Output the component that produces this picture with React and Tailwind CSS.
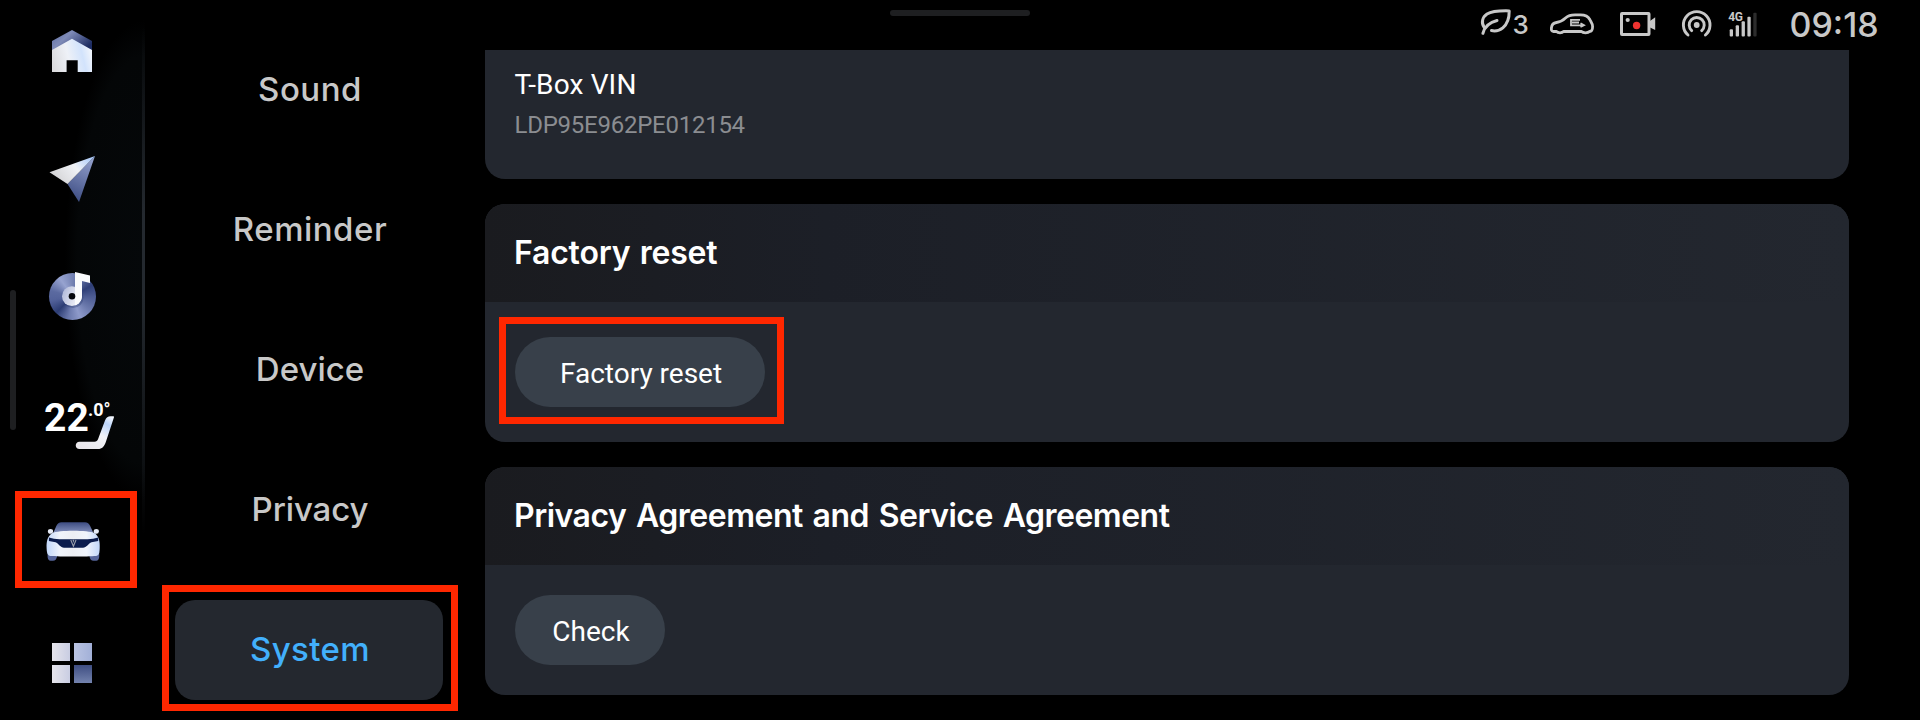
import React from "react";

const menu = [
  { label: "Sound", tracking: "tracking-[0.5px]" },
  { label: "Reminder", tracking: "tracking-[0.5px]" },
  { label: "Device", tracking: "tracking-[0px]" },
  { label: "Privacy", tracking: "tracking-[-0.1px]" },
  { label: "System", tracking: "tracking-[0.4px]", active: true },
];

function Highlight({ className }) {
  return <div className={`pointer-events-none absolute border-[7px] border-[#ff2700] ${className}`} />;
}

function HomeIcon() {
  return (
    <svg width="145" height="110" viewBox="0 0 145 110" className="block">
      <defs>
        <linearGradient id="homeRoof" x1="0" y1="0" x2="1" y2="0.6">
          <stop offset="0" stopColor="#5a6a9e" />
          <stop offset="0.4" stopColor="#7f8bb8" />
          <stop offset="1" stopColor="#1d2c62" />
        </linearGradient>
        <linearGradient id="homeBody" x1="0" y1="0.6" x2="1" y2="0.4">
          <stop offset="0" stopColor="#dcdcdf" />
          <stop offset="0.4" stopColor="#eef1f7" />
          <stop offset="0.75" stopColor="#d2e3fc" />
          <stop offset="1" stopColor="#f3f6fc" />
        </linearGradient>
      </defs>
      <path d="M72 30 92 41V52H52V41Z" fill="url(#homeRoof)" />
      <path d="M72 38.8 92 50V72H77.7V60.3H66.6V72H52V50Z" fill="url(#homeBody)" />
    </svg>
  );
}

function NavigateIcon() {
  return (
    <svg width="145" height="125" viewBox="0 110 145 125" className="block">
      <defs>
        <linearGradient id="wingTop" x1="0" y1="0.5" x2="1" y2="0">
          <stop offset="0" stopColor="#d6d6d8" />
          <stop offset="0.5" stopColor="#f0f2f6" />
          <stop offset="1" stopColor="#9fc4fb" />
        </linearGradient>
        <linearGradient id="wingSide" x1="0.7" y1="0" x2="0.4" y2="1">
          <stop offset="0" stopColor="#93a0cc" />
          <stop offset="1" stopColor="#3f4f85" />
        </linearGradient>
      </defs>
      <path d="M95 156 67.5 184 79 202Z" fill="url(#wingSide)" />
      <path d="M95 156 49.5 172.3 67.5 184Z" fill="url(#wingTop)" />
    </svg>
  );
}

function MusicIcon() {
  return (
    <div className="relative h-[125px] w-[145px] pl-[49px] pt-[38px]">
      <div className="h-[47px] w-[47px] rounded-full bg-[conic-gradient(from_0deg,#7583b4,#5a699e_30deg,#2f3f77_60deg,#4c5b92_90deg,#6a78ab_125deg,#8e9aca_160deg,#6c7aae_190deg,#2d3d74_225deg,#53629a_260deg,#5b6aa0_285deg,#97a3d0_325deg,#7583b4)]" />
      <svg width="145" height="125" viewBox="0 235 145 125" className="absolute left-0 top-0 block">
        <defs>
          <linearGradient id="noteHead" x1="0" y1="0" x2="1" y2="0.4">
            <stop offset="0" stopColor="#aab3d6" />
            <stop offset="1" stopColor="#f4f5fa" />
          </linearGradient>
        </defs>
        <circle cx="73" cy="297.5" r="10.5" fill="#26366b" opacity="0.35" />
        <circle cx="71.9" cy="296.2" r="9.9" fill="url(#noteHead)" />
        <path d="M75 272 90 275.5V283L82 281V296.5C82 300 79 304 75 305.3Z" fill="#fafbfd" />
        <circle cx="72" cy="296.3" r="3.3" fill="#05070d" />
      </svg>
    </div>
  );
}

function Temperature() {
  return (
    <div className="relative h-[120px] w-[145px] font-['Roboto',sans-serif] font-bold text-white">
      <div className="flex items-start pl-[44px] pt-[38.5px]">
        <span className="w-[44px] text-[39px] leading-[39px]">22</span>
        <span className="mt-[2px] text-[18px] leading-[18px]">.0°</span>
      </div>
      <svg width="145" height="120" viewBox="0 360 145 120" className="absolute left-0 top-0 block">
        <defs>
          <linearGradient id="seat" x1="0.2" y1="1" x2="0.9" y2="0">
            <stop offset="0" stopColor="#e9e6ea" />
            <stop offset="0.5" stopColor="#f2f3f8" />
            <stop offset="0.8" stopColor="#bcd5fb" />
            <stop offset="1" stopColor="#f4f8ff" />
          </linearGradient>
        </defs>
        <path
          d="M79.5 441.7H94.5C96.5 441.7 97.3 441 98 439.3L105 420.5C106.2 417.3 108 416.2 110.5 416.2H113C114 416.2 114.2 416.8 113.9 417.6L106 441.5C104.4 446.5 102 449 98 449H79.5C74.5 449 74.5 441.7 79.5 441.7Z"
          fill="url(#seat)"
        />
      </svg>
    </div>
  );
}

function CarIcon() {
  return (
    <div className="relative h-[120px] w-[145px]">
      <svg width="145" height="120" viewBox="0 480 145 120" className="block">
        <defs>
          <linearGradient id="carRoof" x1="0" y1="0" x2="0" y2="1">
            <stop offset="0" stopColor="#3c4b80" />
            <stop offset="1" stopColor="#8592be" />
          </linearGradient>
          <linearGradient id="carBody" x1="0" y1="0" x2="1" y2="0">
            <stop offset="0" stopColor="#c2d7fa" />
            <stop offset="0.25" stopColor="#f0f4fb" />
            <stop offset="0.5" stopColor="#eceef3" />
            <stop offset="0.75" stopColor="#f0f4fb" />
            <stop offset="1" stopColor="#c2d7fa" />
          </linearGradient>
        </defs>
        <path d="M47.6 552H57V556.5Q56.3 560.7 53 560.7H50.5Q48 560.7 47.6 557ZM99.2 552H89.5V556.5Q90.2 560.7 93.5 560.7H96.3Q98.800 560.7 99.2 557Z" fill="#56659a" />
        <path d="M53.3 533 56.3 526Q57.8 522.2 61.5 522.2H85Q88.7 522.2 90.2 526L93.4 533Z" fill="url(#carRoof)" />
        <ellipse cx="50.5" cy="531.4" rx="2.6" ry="2.3" fill="#e6ebf6" />
        <ellipse cx="96.3" cy="531.4" rx="2.6" ry="2.3" fill="#e6ebf6" />
        <path d="M52 533.2C59 530 87.5 530 94.7 533.2C99 536.5 100 541 99.7 548C99.5 553.5 99 555.5 96 555.9C88 556.6 59 556.6 50.5 555.9C47.5 555.5 46.8 553 46.6 548C46.4 541 47.5 536.5 52 533.2Z" fill="url(#carBody)" />
        <path d="M48.9 537.4Q54 539.3 60 539.2H87Q93 539.3 98.2 537.4V540.9L91.5 542.3C88.5 543.5 86.5 547.8 83 547.8H64C60.5 547.8 58.5 543.5 55.5 542.3L48.9 540.9Z" fill="#0b1c4d" />
        <path d="M70.8 540 73.4 546.3 76 540" fill="none" stroke="#9a9ea9" strokeWidth="1.1" />
        <path d="M72.5 539.8H74.3L73.4 543Z" fill="#9a9ea9" />
      </svg>
      <Highlight className="left-[15px] top-[11px] h-[97px] w-[122px]" />
    </div>
  );
}

function AppsIcon() {
  return (
    <div className="grid h-[120px] w-[145px] grid-cols-[18px_18px] grid-rows-[18px_18px] content-start gap-1 pl-[52px] pt-[43px]">
      <div className="bg-linear-to-r from-[#e6e5ec] to-[#c9cde2]" />
      <div className="bg-linear-to-r from-[#bac4e2] to-[#a2b0d8]" />
      <div className="bg-linear-to-r from-[#e6e5ec] to-[#c9cde2]" />
      <div className="bg-linear-to-b from-[#3f4e82] to-[#7483ae]" />
    </div>
  );
}

function StatusBar() {
  return (
    <header className="flex h-[50px] shrink-0 items-start justify-end font-['Inter',sans-serif] font-medium text-[#c8c8c8]">
      <svg width="34" height="50" viewBox="1478 0 34 50" fill="none" stroke="#c8c8c8" strokeWidth="3" strokeLinecap="round" strokeLinejoin="round">
        <path d="M1484.2 27.5C1480.8 22.5 1482.5 17 1487 14C1492.5 10.7 1501 10.7 1509.2 10.9C1509.3 17 1507.8 23.5 1502.8 27.8C1499.5 30.6 1495.3 31.3 1491.5 30.6" />
        <path d="M1482.9 33.3C1484.2 27.5 1488.5 22.8 1497 20.5" />
      </svg>
      <span className="w-[18px] pl-[0.5px] text-[26px] leading-[49px]">3</span>
      <svg width="52" height="50" viewBox="1546 0 52 50" fill="none" stroke="#c8c8c8" strokeWidth="2.8" strokeLinecap="round" strokeLinejoin="round" className="ml-4">
        <path d="M1556.5 31.5H1553.5C1551.5 31.5 1551.2 30 1551.4 28C1551.7 24.5 1553 23 1556.5 22.500C1560.500 22 1562.500 20.800 1565.500 18C1568.300 15.400 1570.500 14.900 1575 14.900H1580.500C1585 14.900 1588 16 1589.800 19.500C1591 22 1592.600 23.500 1592.600 26.500C1592.600 30 1592 31.500 1589.500 31.500C1588 33.200 1583 33.200 1581.500 31.500H1563.500C1562 33.200 1558 33.200 1556.500 31.500Z" />
        <path d="M1580 19.800H1571V25.300H1583.500M1572 22.500H1579M1580.500 23.300 1584 25.300 1580.500 27" strokeWidth="1.800" strokeLinecap="butt" strokeLinejoin="miter" />
      </svg>
      <svg width="42" height="50" viewBox="1616 0 42 50" className="ml-[18px]">
        <rect x="1621.500" y="13.500" width="27.500" height="21" rx="0.500" fill="none" stroke="#c8c8c8" strokeWidth="3" />
        <circle cx="1627.700" cy="20" r="2.100" fill="#c8c8c8" />
        <circle cx="1636.600" cy="25.500" r="3.700" fill="#ee3330" />
        <path d="M1650 21 1655.200 17.300V30L1650 27.500Z" fill="#c8c8c8" />
      </svg>
      <svg width="36" height="50" viewBox="1678 0 36 50" fill="none" stroke="#c8c8c8" strokeWidth="2.900" strokeLinecap="round" className="ml-5">
        <circle cx="1696.700" cy="25" r="2.900" fill="#c8c8c8" stroke="none" />
        <path d="M1691.700 30.600A7.500 7.500 0 1 1 1701.700 30.600" />
        <path d="M1688 35A13.300 13.300 0 1 1 1705.400 35" />
      </svg>
      <svg width="34" height="50" viewBox="1726 0 34 50" className="ml-3">
        <text x="1728.200" y="20.700" fill="#c8c8c8" className="font-['Roboto',sans-serif] text-[12px] font-bold tracking-[-0.2px]">4G</text>
        <g fill="#c8c8c8">
          <rect x="1729.700" y="29.300" width="3.300" height="7.200" rx="1" />
          <rect x="1735.700" y="25.300" width="3.300" height="11.200" rx="1" />
          <rect x="1741.600" y="21.300" width="3.300" height="15.200" rx="1" />
          <rect x="1747.400" y="16.700" width="3.300" height="19.800" rx="1" />
          <rect x="1753.300" y="12.700" width="3.300" height="23.800" rx="1" fill="#2c2c2c" />
        </g>
      </svg>
      <span className="ml-[29px] w-[131px] pl-[0.5px] text-[34px] leading-[49px]">09:18</span>
    </header>
  );
}

function Pill({ children, className }) {
  return (
    <button className={`flex h-[70px] items-center justify-center rounded-full bg-[#38404a] pl-[2px] pt-[3px] font-['Roboto',sans-serif] text-[28px] leading-[28px] text-white ${className}`}>
      {children}
    </button>
  );
}

function CardHeader({ children, className }) {
  return (
    <h2 className={`flex h-[98px] items-center bg-[linear-gradient(90deg,#1a1b1f,#1c1f27_25%,#23272f)] pl-[29px] font-['Inter',sans-serif] text-[32px] font-semibold leading-[40px] text-white ${className}`}>
      {children}
    </h2>
  );
}

export default function App() {
  return (
    <div className="relative flex h-[720px] w-[1920px] overflow-hidden bg-black">
      <aside className="flex w-[145px] shrink-0 flex-col bg-[radial-gradient(ellipse_80px_240px_at_145px_260px,#05080a_0%,#040607_85%,transparent_100%)]">
        <HomeIcon />
        <NavigateIcon />
        <MusicIcon />
        <Temperature />
        <CarIcon />
        <AppsIcon />
      </aside>
      <div className="absolute left-[142px] top-0 h-[535px] w-[3px] bg-[linear-gradient(180deg,transparent_5%,#24292f_40%,#24292f_55%,transparent)]" />
      <div className="absolute left-[10px] top-[290px] h-[140px] w-[6px] rounded-full bg-[#1e1f21]" />
      <div className="absolute left-[890px] top-[10px] h-[6px] w-[140px] rounded-full bg-[#1e1f21]" />

      <nav className="flex w-[340px] shrink-0 flex-col gap-10 pl-[30px] pt-10 font-['Inter',sans-serif] text-[33px] font-medium leading-[40px]">
        {menu.map((item) => (
          <div
            key={item.label}
            className={`relative flex h-[100px] w-[268px] items-center justify-center rounded-[20px] pb-[2px] pl-[2px] ${item.tracking} ${item.active ? "bg-[#24282f] text-[#42b0fc]" : "text-[#c8c8c8]"}`}
          >
            {item.label}
            {item.active && <Highlight className="-left-[13px] -top-[15px] h-[126px] w-[296px]" />}
          </div>
        ))}
      </nav>

      <main className="flex flex-1 flex-col">
        <StatusBar />
        <div className="flex w-[1364px] flex-col gap-[25px]">
          <section className="h-[129px] rounded-b-[20px] bg-[#23272f] pl-[29.5px] pt-[15px] font-['Roboto',sans-serif]">
            <div className="text-[28px] leading-[40px] tracking-[0.15px] text-white">T-Box VIN</div>
            <div className="mt-[5px] text-[24px] leading-[30px] tracking-[-0.25px] text-[#8b8d91]">LDP95E962PE012154</div>
          </section>

          <section className="h-[238px] overflow-hidden rounded-[20px] bg-[#23272f]">
            <CardHeader className="tracking-[-0.2px] [word-spacing:1.5px]">Factory reset</CardHeader>
            <div className="relative pl-[30px] pt-[35px]">
              <Pill className="w-[250px]">Factory reset</Pill>
              <Highlight className="left-[14px] top-[15px] h-[107px] w-[285px]" />
            </div>
          </section>

          <section className="h-[228px] overflow-hidden rounded-[20px] bg-[#23272f]">
            <CardHeader className="tracking-[-0.5px] [word-spacing:2.2px]">Privacy Agreement and Service Agreement</CardHeader>
            <div className="pl-[30px] pt-[30px]">
              <Pill className="w-[150px]">Check</Pill>
            </div>
          </section>
        </div>
      </main>
    </div>
  );
}
